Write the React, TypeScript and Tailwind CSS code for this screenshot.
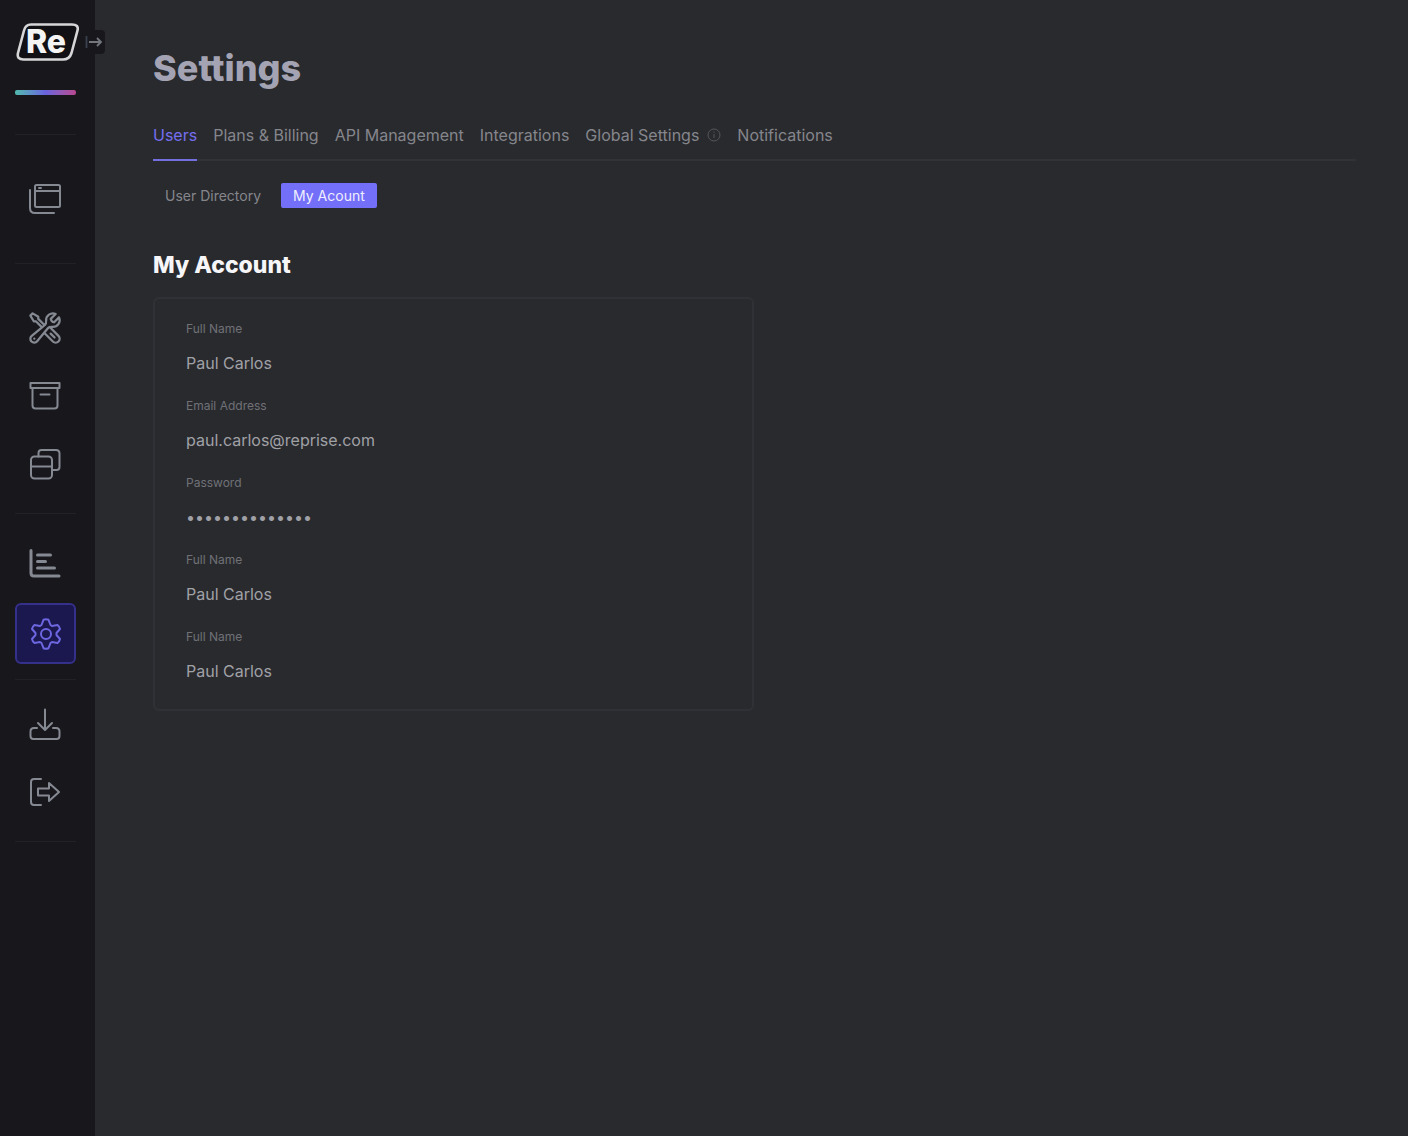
import type { ReactNode } from "react";
import { HiOutlineWrenchScrewdriver } from "react-icons/hi2";

function Icon({ children }: { children: ReactNode }) {
  return (
    <svg
      viewBox="0 0 32 32"
      className="size-8"
      fill="none"
      stroke="currentColor"
      strokeWidth="2"
      strokeLinecap="round"
      strokeLinejoin="round"
      aria-hidden="true"
    >
      {children}
    </svg>
  );
}

function NavButton({ label, active, children }: { label: string; active?: boolean; children: ReactNode }) {
  return (
    <button
      type="button"
      aria-label={label}
      aria-current={active ? "page" : undefined}
      className={
        active
          ? "flex h-[61px] w-full items-center justify-center rounded-md border-2 border-[#35308a] bg-[#1b184f] text-[#6c66e0]"
          : "flex h-[61px] w-full items-center justify-center pr-0.5 text-[#858992]"
      }
    >
      {children}
    </button>
  );
}

function NavGroup({ className, children }: { className: string; children: ReactNode }) {
  return <div className={"flex flex-col border-b border-[#222127] " + className}>{children}</div>;
}

function Logo() {
  return (
    <svg viewBox="0 0 64 40" className="h-10 w-16" aria-label="Re" role="img">
      <path
        d="M16 2.500H57Q64 2.500 62.500 8.500L56.500 31Q54.500 37.500 48 37.500H8.500Q1.500 37.500 3 31L9 8.500Q10.500 2.500 16 2.500Z"
        fill="#111014"
        stroke="#d6d6d8"
        strokeWidth="2.6"
      />
      <text x="11" y="31" fontFamily="Inter, sans-serif" fontWeight="800" fontSize="32" fill="#f4f4f5">
        Re
      </text>
    </svg>
  );
}

function Sidebar() {
  return (
    <aside className="w-[95px] shrink-0 bg-[#18171c] pr-[19px] pl-[15px]">
      <div className="relative mt-[22px] flex">
        <a href="#home" aria-label="Home" className="shrink-0">
          <Logo />
        </a>
        <button
          type="button"
          aria-label="Expand sidebar"
          className="absolute top-2 left-[67px] flex h-6 w-[23px] items-center justify-center rounded-sm bg-[#18171c] text-[#73767d]"
        >
          <svg viewBox="0 0 18 16" className="h-4 w-[18px]" fill="none" stroke="currentColor" strokeWidth="1.8" aria-hidden="true">
            <path d="M1.500 2v12" stroke="#39414f" />
            <path d="M4 8h12M12 4l4 4-4 4" />
          </svg>
        </button>
      </div>
      <div className="mt-7 h-[5px] rounded-xs bg-linear-to-r from-[#50b9ac] via-[#6862dd] to-[#b8458f]" />
      <nav aria-label="Main" className="flex flex-col">
        <NavGroup className="h-10">{null}</NavGroup>
        <NavGroup className="pt-[33px] pb-[34px]">
          <NavButton label="Windows">
            <Icon>
              <rect x="6" y="2" width="25" height="22" rx="1.5" />
              <path d="M6 8h25M10 5h2M1 7v18q0 5 5 5H25" />
            </Icon>
          </NavButton>
        </NavGroup>
        <NavGroup className="gap-[7px] pt-[33px] pb-[19px]">
          <NavButton label="Tools">
            <HiOutlineWrenchScrewdriver className="size-9" aria-hidden="true" />
          </NavButton>
          <NavButton label="Archive">
            <Icon>
              <path d="M1.500 3h29v5h-29zM3.500 8v17.500q0 3 3 3h19q3 0 3-3V8M11.500 14.500h9" />
            </Icon>
          </NavButton>
          <NavButton label="Collections">
            <Icon>
              <rect x="2" y="8.500" width="21" height="22" rx="3.500" />
              <path d="M2 18.500h21M9.500 8.500V5Q9.500 2 12.500 2H27q3.500 0 3.500 3.500V19q0 3-3 3H23.500" />
            </Icon>
          </NavButton>
        </NavGroup>
        <NavGroup className="gap-[9px] pt-[19px] pb-[15px]">
          <NavButton label="Analytics">
            <Icon>
              <path d="M2 2.500V25q0 3 3 3h25" strokeWidth="3" />
              <path d="M8.500 7h13M8.500 13.500h8M8.500 20h17" strokeWidth="3" />
            </Icon>
          </NavButton>
          <NavButton label="Settings" active>
            <Icon>
              <path d="M11.500 7 13.500 1.800Q16 0.800 18.500 1.800L20.500 7l1.500 1 5.500-1q2 1.500 2.500 4L26.500 15v2l3.500 4q-.5 2.500-2.500 4L22 24l-1.500 1-2 5.200q-2.500 1-5 0L11.500 25 10 24l-5.500 1Q2.500 23.500 2 21l3.500-4v-2L2 11q.5-2.500 2.500-4L10 8z" />
              <circle cx="16" cy="16" r="5" />
            </Icon>
          </NavButton>
        </NavGroup>
        <NavGroup className="gap-[7px] pt-[13px] pb-[19px]">
          <NavButton label="Download">
            <Icon>
              <path d="M16 1.500v20M9 15l7 7 7-7M8 20H5q-3.500 0-3.500 3.500V28q0 3 3 3h23q3 0 3-3v-4.500Q30.500 20 27 20h-3" />
            </Icon>
          </NavButton>
          <NavButton label="Log out">
            <Icon>
              <path d="M12 3H5Q2 3 2 6v20q0 3 3 3h7M9 12.500h11V7l10 9-10 9v-5.500H9z" />
            </Icon>
          </NavButton>
        </NavGroup>
      </nav>
    </aside>
  );
}

const tabs = ["Users", "Plans & Billing", "API Management", "Integrations", "Global Settings", "Notifications"];

const fields = [
  { label: "Full Name", value: "Paul Carlos" },
  { label: "Email Address", value: "paul.carlos@reprise.com" },
  { label: "Password", value: "••••••••••••••" },
  { label: "Full Name", value: "Paul Carlos" },
  { label: "Full Name", value: "Paul Carlos" },
];

function Tabs() {
  return (
    <nav aria-label="Settings sections" className="flex gap-4 border-b-2 border-[#313237]">
      {tabs.map((tab) => (
        <a
          key={tab}
          href="#section"
          aria-current={tab === "Users" ? "page" : undefined}
          className={
            tab === "Users"
              ? "-mb-[2px] border-b-2 border-[#746fe0] pb-3 text-base leading-6 text-[#746ff0]"
              : "flex items-center pb-3 text-base leading-6 text-[#85868c]"
          }
        >
          {tab}
          {tab === "Global Settings" && (
            <svg viewBox="0 0 14 14" className="ml-2 size-[14px] text-[#55565c]" fill="none" stroke="currentColor" aria-hidden="true">
              <circle cx="7" cy="7" r="6" />
              <path d="M7 6v4M7 3.500v1.200" />
            </svg>
          )}
        </a>
      ))}
    </nav>
  );
}

export default function App() {
  return (
    <div className="flex min-h-screen bg-[#292a2e] font-['Inter',sans-serif]">
      <Sidebar />
      <main className="min-w-0 flex-1 pt-12 pr-[52px] pb-12 pl-[58px]">
        <h1 className="text-4xl leading-10 font-extrabold text-[#a3a3b3]">Settings</h1>
        <div className="mt-[35px]">
          <Tabs />
        </div>
        <div className="mt-[22px] flex gap-2">
          <button type="button" className="h-[25px] px-3 text-sm text-[#85868c]">
            User Directory
          </button>
          <button type="button" className="h-[25px] rounded-xs bg-[#746ff8] px-3 text-sm text-[#efeeff]">
            My Acount
          </button>
        </div>
        <h2 className="mt-[41px] text-[23px] leading-8 font-extrabold text-[#f6f6f8]">My Account</h2>
        <section aria-label="My Account" className="mt-4 w-full max-w-[601px] rounded-md border-2 border-[#303136] px-[31px] pt-[22px] pb-[26px]">
          <dl className="flex flex-col gap-[23px]">
            {fields.map((field, i) => (
              <div key={i}>
                <dt className="text-xs leading-4 text-[#707177]">{field.label}</dt>
                <dd className="mt-[14px] text-base leading-6 text-[#a0a1a6]">{field.value}</dd>
              </div>
            ))}
          </dl>
        </section>
      </main>
    </div>
  );
}
